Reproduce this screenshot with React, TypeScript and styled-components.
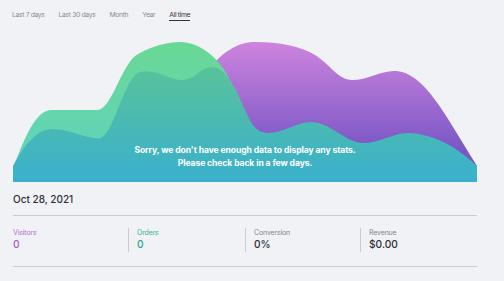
import React from "react";
import styled, { createGlobalStyle } from "styled-components";

const Global = createGlobalStyle`
  html, body { margin: 0; padding: 0; background: #f1f2f6; }
  body { font-family: Inter, "Noto Sans", sans-serif; }
`;

const Page = styled.div`
  width: 464px;
  padding: 0 27px 0 13px;
  display: flex;
  flex-direction: column;
`;

const Tabs = styled.div`
  display: flex;
  gap: 14px;
  padding-top: 10px;
  height: 14px;
  margin-left: -1px;
`;

const Tab = styled.span<{ $active?: boolean }>`
  font-size: 6.8px;
  line-height: 10px;
  height: 10px;
  letter-spacing: -0.35px;
  color: ${(p) => (p.$active ? "#333" : "#8a8c92")};
  border-bottom: ${(p) => (p.$active ? "1px solid #333" : "1px solid transparent")};
`;

const ChartBox = styled.div`
  position: relative;
  margin-top: 16px;
  width: 464px;
  height: 142px;
`;

const ChartSvg = styled.svg`
  display: block;
`;

const Notice = styled.div`
  position: absolute;
  left: 0;
  right: 0;
  top: 104px;
  text-align: center;
  color: #fff;
  font-weight: 700;
  font-size: 8.6px;
  line-height: 12.5px;
  letter-spacing: -0.1px;
`;

const DateTitle = styled.div`
  height: 33px;
  display: flex;
  align-items: center;
  font-size: 10px;
  font-weight: 500;
  color: #2e2f33;
  border-bottom: 1px solid #cbcdd2;
`;

const Stats = styled.div`
  display: grid;
  grid-template-columns: 115px 117px 115px 117px;
  padding: 12px 0 14px;
  border-bottom: 1px solid #cbcdd2;
`;

const Stat = styled.div<{ $first?: boolean }>`
  padding-left: ${(p) => (p.$first ? "0" : "8px")};
  border-left: ${(p) => (p.$first ? "none" : "1px solid #c9cbd0")};
  height: 24px;
  display: flex;
  flex-direction: column;
`;

const Label = styled.div<{ $color: string }>`
  font-size: 7px;
  line-height: 10px;
  color: ${(p) => p.$color};
  letter-spacing: -0.15px;
`;

const Value = styled.div<{ $color: string }>`
  font-size: 10.2px;
  line-height: 13px;
  font-weight: 500;
  color: ${(p) => p.$color};
`;

const ox = 13;
const oy = 40;

function shift(d: string) {
  return d.replace(/(-?\d+(?:\.\d+)?),(-?\d+(?:\.\d+)?)/g, (_, a, b) =>
    `${(parseFloat(a) - ox).toFixed(1)},${(parseFloat(b) - oy).toFixed(1)}`
  );
}

const purple = shift(
  "M205,75 C220,52 238,42 255,42 C280,42 300,46 315,55 C330,64 338,80 352,80 C368,80 382,70 396,71 C425,73 445,115 477,166 L477,182 L205,182 Z"
);
const green = shift(
  "M13,168 C25,138 35,110 52,110 L97,110 C112,110 122,62 138,54 C152,46 168,42 180,42 C196,42 210,52 220,64 C234,82 245,118 260,145 L260,182 L13,182 Z"
);
const teal = shift(
  "M13,166 C25,145 36,129 53,129 C70,129 88,140 100,138 C114,136 124,76 140,72 C155,68 170,80 182,80 C195,80 201,67 212,67 C225,67 236,88 245,110 C251,124 257,133 267,133 C285,133 296,122 311,122 C330,122 346,143 363,143 C380,143 395,132 410,133 C438,135 460,150 477,166 L477,182 L13,182 Z"
);

export default function App() {
  return (
    <>
      <Global />
      <Page>
        <Tabs>
          <Tab>Last 7 days</Tab>
          <Tab>Last 30 days</Tab>
          <Tab>Month</Tab>
          <Tab>Year</Tab>
          <Tab $active>All time</Tab>
        </Tabs>
        <ChartBox>
          <ChartSvg width="464" height="142" viewBox="0 0 464 142">
            <defs>
              <linearGradient id="gp" x1="0" y1="0" x2="0" y2="1">
                <stop offset="0" stopColor="#cd84de" />
                <stop offset="0.75" stopColor="#7c58c6" />
                <stop offset="1" stopColor="#7452c2" />
              </linearGradient>
              <linearGradient id="gg" x1="0" y1="0" x2="0" y2="1">
                <stop offset="0" stopColor="#6ad894" />
                <stop offset="1" stopColor="#5fd2c4" />
              </linearGradient>
              <linearGradient id="gt" x1="0" y1="0" x2="0" y2="1">
                <stop offset="0" stopColor="#58c39a" />
                <stop offset="1" stopColor="#3ab0cd" />
              </linearGradient>
            </defs>
            <path d={purple} fill="url(#gp)" />
            <path d={green} fill="url(#gg)" />
            <path d={teal} fill="url(#gt)" />
          </ChartSvg>
          <Notice>
            Sorry, we don't have enough data to display any stats.
            <br />
            Please check back in a few days.
          </Notice>
        </ChartBox>
        <DateTitle>Oct 28, 2021</DateTitle>
        <Stats>
          <Stat $first>
            <Label $color="#b56ad8">Visitors</Label>
            <Value $color="#a05ccc">0</Value>
          </Stat>
          <Stat>
            <Label $color="#32b295">Orders</Label>
            <Value $color="#2aa98f">0</Value>
          </Stat>
          <Stat>
            <Label $color="#80838a">Conversion</Label>
            <Value $color="#2e2f33">0%</Value>
          </Stat>
          <Stat>
            <Label $color="#80838a">Revenue</Label>
            <Value $color="#2e2f33">$0.00</Value>
          </Stat>
        </Stats>
      </Page>
    </>
  );
}
